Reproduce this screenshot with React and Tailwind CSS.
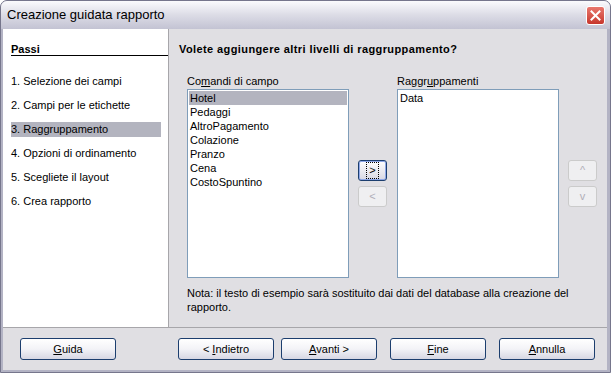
import React, { useState } from 'react';

const steps = [
  '1. Selezione dei campi',
  '2. Campi per le etichette',
  '3. Raggruppamento',
  '4. Opzioni di ordinamento',
  '5. Scegliete il layout',
  '6. Crea rapporto',
];

const fields = ['Hotel', 'Pedaggi', 'AltroPagamento', 'Colazione', 'Pranzo', 'Cena', 'CostoSpuntino'];

function XpButton({ children, className = '' }) {
  return (
    <button
      type="button"
      className={`h-[22px] rounded-[3px] border border-[#1c3e6e] bg-gradient-to-b from-white via-[#f3f3f7] to-[#d7d7e3] text-[11px] text-black leading-none flex items-center justify-center ${className}`}
    >
      {children}
    </button>
  );
}

function SmallButton({ children, disabled, focused }) {
  if (disabled) {
    return (
      <div className="w-[29px] h-[21px] rounded-[3px] border border-[#cbcbcb] bg-[#efeff1] text-[11px] text-[#b0aeb8] flex items-center justify-center">
        {children}
      </div>
    );
  }
  return (
    <div className="w-[29px] h-[21px] rounded-[3px] border border-[#1c3e6e] bg-gradient-to-b from-white to-[#d7d7e3] flex items-center justify-center shadow-[inset_0_0_0_1px_#8fa8e8]">
      <span className={`text-[11px] leading-none px-[2px] py-[2px] ${focused ? 'outline outline-1 outline-dotted outline-black' : ''}`}>
        {children}
      </span>
    </div>
  );
}

export default function App() {
  const [current] = useState(2);
  const [selected] = useState('Hotel');

  return (
    <div
      className="w-[611px] h-[373px] flex flex-col bg-[#b3b3c4] border border-[#76768c] rounded-t-[7px] overflow-hidden"
      style={{ fontFamily: '"Liberation Sans", Arial, sans-serif' }}
    >
      {/* title bar */}
      <div className="h-[28px] shrink-0 flex items-center justify-between pl-[6px] pr-[5px] bg-gradient-to-b from-[#fbfbfd] via-[#dcdce6] to-[#c3c3d3]">
        <span className="text-[13px] text-black">Creazione guidata rapporto</span>
        <div className="w-[19px] h-[19px] rounded-[3px] border border-white bg-gradient-to-b from-[#e8776d] to-[#c7352c] flex items-center justify-center">
          <svg width="11" height="11" viewBox="0 0 11 11">
            <path d="M1.5 1.5 L9.5 9.5 M9.5 1.5 L1.5 9.5" stroke="white" strokeWidth="2" strokeLinecap="square" />
          </svg>
        </div>
      </div>

      <div className="flex-1 flex flex-col ml-[2px] mr-[3px] mb-[2px] bg-[#e0dfe3]">
        <div className="h-[299px] flex border-b border-[#a7a6aa]">
          {/* steps */}
          <div className="w-[166px] shrink-0 bg-white border-r border-[#a7a6aa] pl-[8px] pt-[13px]">
            <div className="text-[11px] font-bold text-black leading-[14px]">Passi</div>
            <div className="h-px bg-black mt-[-1px] mb-[18px]" />
            <div className="flex flex-col gap-[9px] pr-[7px]">
              {steps.map((s, i) => (
                <div
                  key={s}
                  className={`h-[15px] leading-[15px] text-[11px] text-black ${i === current ? 'bg-[#b3b4bf]' : ''}`}
                >
                  {s}
                </div>
              ))}
            </div>
          </div>

          {/* content */}
          <div className="flex-1 pl-[10px] pt-[13px]">
            <div className="text-[11px] font-bold text-black leading-[14px] tracking-[0.4px]">
              Volete aggiungere altri livelli di raggruppamento?
            </div>
            <div className="flex mt-[18px] pl-[8px]">
              <div className="w-[162px] flex flex-col">
                <div className="text-[11px] leading-[14px] text-black mb-[1px]">
                  Co<span className="underline">m</span>andi di campo
                </div>
                <div className="h-[189px] bg-white border border-[#7f9db9] p-[1px]">
                  {fields.map((f) => (
                    <div
                      key={f}
                      className={`h-[14px] leading-[14px] text-[11px] text-black pl-[1px] ${f === selected ? 'bg-[#b3b4bf]' : ''}`}
                    >
                      {f}
                    </div>
                  ))}
                </div>
              </div>
              <div className="flex flex-col gap-[5px] pt-[86px] ml-[9px] mr-[10px]">
                <SmallButton focused>&gt;</SmallButton>
                <SmallButton disabled>&lt;</SmallButton>
              </div>
              <div className="w-[162px] flex flex-col">
                <div className="text-[11px] leading-[14px] text-black mb-[1px]">
                  Raggr<span className="underline">u</span>ppamenti
                </div>
                <div className="h-[189px] bg-white border border-[#7f9db9] p-[1px]">
                  <div className="h-[14px] leading-[14px] text-[11px] text-black pl-[1px]">Data</div>
                </div>
              </div>
              <div className="flex flex-col gap-[5px] pt-[86px] ml-[9px]">
                <SmallButton disabled>^</SmallButton>
                <SmallButton disabled>v</SmallButton>
              </div>
            </div>
            <p className="mt-[8px] pl-[8px] w-[400px] text-[11px] leading-[14px] text-black">
              Nota: il testo di esempio sarà sostituito dai dati del database alla creazione del rapporto.
            </p>
          </div>
        </div>

        {/* buttons */}
        <div className="flex-1 flex items-start pt-[10px] pl-[17px]">
          <XpButton className="w-[96px]">
            <span className="underline">G</span>uida
          </XpButton>
          <XpButton className="w-[96px] ml-[62px]">
            &lt; <span className="underline ml-[3px]">I</span>ndietro
          </XpButton>
          <XpButton className="w-[96px] ml-[7px]">
            <span className="underline">A</span>vanti &gt;
          </XpButton>
          <XpButton className="w-[96px] ml-[13px]">
            <span className="underline">F</span>ine
          </XpButton>
          <XpButton className="w-[96px] ml-[13px]">
            <span className="underline">A</span>nnulla
          </XpButton>
        </div>
      </div>
    </div>
  );
}
